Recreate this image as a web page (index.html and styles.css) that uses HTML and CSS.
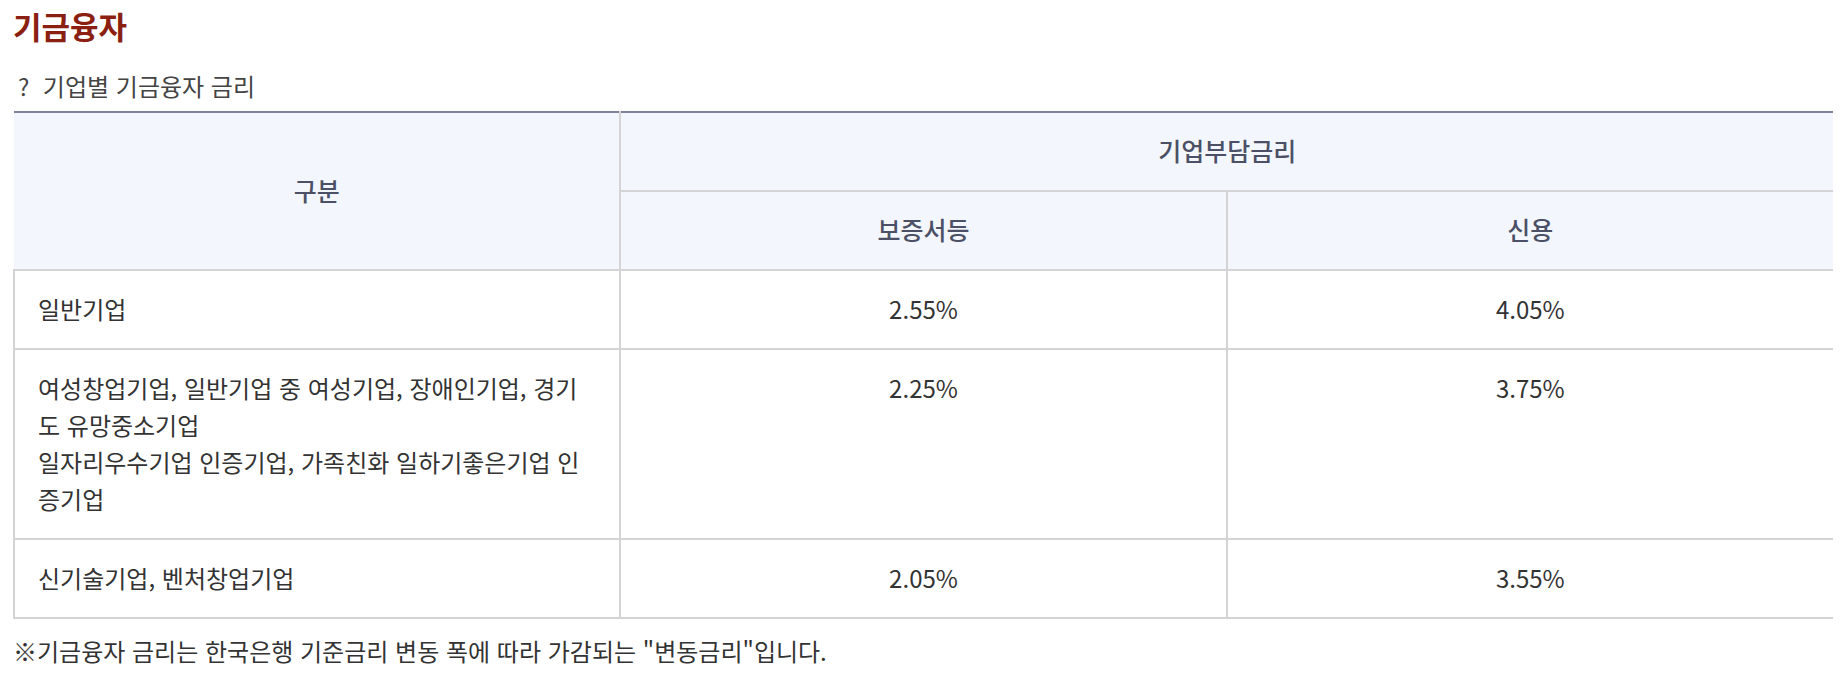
FILE: index.html
```html
<!DOCTYPE html>
<html lang="ko">
<head>
<meta charset="utf-8">
<title>기금융자</title>
<link rel="stylesheet" href="styles.css">
</head>
<body>
<h2 class="title">기금융자</h2>
<p class="sub">?&nbsp; 기업별 기금융자 금리</p>
<table class="rate">
  <colgroup><col class="c"><col class="c"><col class="c"></colgroup>
  <thead>
    <tr>
      <th rowspan="2" class="first">구분</th>
      <th colspan="2">기업부담금리</th>
    </tr>
    <tr>
      <th>보증서등</th>
      <th>신용</th>
    </tr>
  </thead>
  <tbody>
    <tr>
      <td class="name">일반기업</td>
      <td>2.55%</td>
      <td>4.05%</td>
    </tr>
    <tr>
      <td class="name">여성창업기업, 일반기업 중 여성기업, 장애인기업, 경기도 유망중소기업<br>일자리우수기업 인증기업, 가족친화 일하기좋은기업 인증기업</td>
      <td>2.25%</td>
      <td>3.75%</td>
    </tr>
    <tr>
      <td class="name">신기술기업, 벤처창업기업</td>
      <td>2.05%</td>
      <td>3.55%</td>
    </tr>
  </tbody>
</table>
<p class="note">※기금융자 금리는 한국은행 기준금리 변동 폭에 따라 가감되는 "변동금리"입니다.</p>
</body>
</html>
```

FILE: styles.css
```css
html, body {
  background: #ffffff;
}
body {
  margin: 0;
  padding: 9px 15px 0 13px;
  font-family: "Noto Sans CJK KR", "Noto Sans", sans-serif;
  color: #333333;
}
.title {
  margin: 0;
  font-size: 31px;
  line-height: 34px;
  font-weight: 700;
  color: #8a1f12;
}
.sub {
  margin: 28px 0 0 5px;
  font-size: 24px;
  line-height: 30px;
  color: #444444;
}
.rate {
  margin-top: 10px;
  width: 1820px;
  table-layout: fixed;
  border-collapse: collapse;
  border-top: 2px solid #80839a;
}
.rate .c {
  width: 33.33%;
}
.rate th,
.rate td {
  font-size: 24px;
  line-height: 37px;
  padding: 19px 23px 21px;
  text-align: center;
  vertical-align: top;
  border-bottom: 2px solid #d4d4d4;
  border-left: 2px solid #d4d4d4;
}
.rate th {
  background: #f3f6fd;
  color: #4b5066;
  font-size: 25px;
  font-weight: 500;
}
.rate th.first {
  border-left: none;
  vertical-align: middle;
}
.rate td {
  color: #333333;
  font-weight: 400;
}
.rate td.name {
  text-align: left;
}
.note {
  margin: 17px 0 0 0;
  font-size: 24px;
  line-height: 30px;
  color: #333333;
}
```
